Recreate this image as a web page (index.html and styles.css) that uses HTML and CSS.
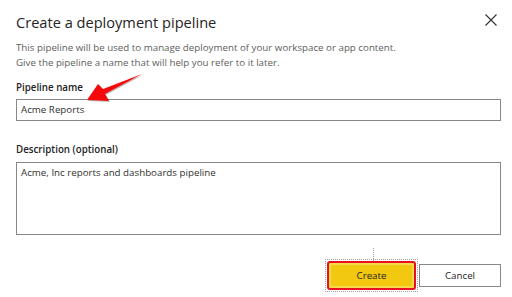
FILE: index.html
```html
<!DOCTYPE html>
<html>
<head>
<meta charset="utf-8">
<link rel="stylesheet" href="styles.css">
</head>
<body>
<div class="dialog">
  <div class="header">
    <h1 class="title">Create a deployment pipeline</h1>
    <button class="close" aria-label="Close">
      <svg width="12" height="12" viewBox="0 0 12 12"><path d="M0.5 0.5 L11.5 11.5 M11.5 0.5 L0.5 11.5" stroke="#323130" stroke-width="1.1" fill="none"/></svg>
    </button>
  </div>
  <p class="intro">This pipeline will be used to manage deployment of your workspace or app content.<br>Give the pipeline a name that will help you refer to it later.</p>
  <label class="label">Pipeline name</label>
  <div class="input">Acme Reports</div>
  <label class="label label-desc">Description (optional)</label>
  <div class="textarea">Acme, Inc reports and dashboards pipeline</div>
  <div class="actions">
    <div class="focus-wrap">
      <button class="btn primary">Create</button>
    </div>
    <button class="btn secondary">Cancel</button>
  </div>
  <span class="guide"></span>
  <svg class="arrow" width="60" height="32" viewBox="0 0 60 32">
    <polygon points="0,27 11,11 16,16 55,1 18,21 22,28" fill="#000" opacity="0.25" transform="translate(1,1)"/>
    <polygon points="0,27 11,11 16,16 55,1 18,21 22,28" fill="#f5090a"/>
  </svg>
</div>
</body>
</html>
```
FILE: styles.css
```css
html, body {
  margin: 0;
  padding: 0;
  background: #ffffff;
}
body {
  font-family: "Open Sans", "Noto Sans", sans-serif;
  color: #252423;
}
.dialog {
  position: relative;
  width: 512px;
  height: 297px;
  box-sizing: border-box;
  padding: 0 11px 0 16px;
}
.header {
  display: flex;
  align-items: center;
  justify-content: space-between;
  height: 40px;
}
.title {
  margin: 3px 0 0 0;
  font-size: 14.6px;
  font-weight: 400;
  color: #252423;
  line-height: 20px;
}
.close {
  border: 0;
  background: transparent;
  padding: 0;
  width: 12px;
  height: 12px;
  margin-right: 4px;
  display: flex;
}
.intro {
  margin: 0;
  font-size: 9.75px;
  line-height: 15px;
  color: #605e5c;
}
.label {
  display: block;
  margin-top: 11px;
  font-size: 9.75px;
  font-weight: 600;
  line-height: 14px;
  color: #252423;
}
.label-desc {
  margin-top: 22px;
}
.input {
  margin-top: 4px;
  height: 22px;
  box-sizing: border-box;
  border: 1px solid #8a8886;
  padding: 0 4px;
  font-size: 9.75px;
  line-height: 20px;
  color: #323130;
}
.textarea {
  margin-top: 5px;
  height: 73px;
  box-sizing: border-box;
  border: 1px solid #8a8886;
  padding: 2px 4px;
  font-size: 9.75px;
  line-height: 15px;
  color: #323130;
}
.actions {
  display: flex;
  justify-content: flex-end;
  align-items: center;
  gap: 2px;
  margin-top: 25px;
}
.focus-wrap {
  outline: 1px dotted #a19f9d;
  outline-offset: 0;
  padding: 1px;
}
.btn {
  font-family: "Open Sans", "Noto Sans", sans-serif;
  font-size: 9.75px;
  height: 23px;
  box-sizing: border-box;
  cursor: pointer;
  display: block;
}
.primary {
  width: 89px;
  height: 29px;
  background: #f2c811;
  color: #252423;
  border: 2px solid #e81123;
  border-radius: 3px;
  box-shadow: inset 0 0 0 2px #f7d94c;
}
.secondary {
  width: 82px;
  background: #ffffff;
  color: #252423;
  border: 1px solid #8a8886;
}
.guide {
  position: absolute;
  left: 373px;
  top: 248px;
  height: 13px;
  border-left: 1px dotted #a19f9d;
}
.arrow {
  position: absolute;
  left: 87px;
  top: 73px;
}
```
